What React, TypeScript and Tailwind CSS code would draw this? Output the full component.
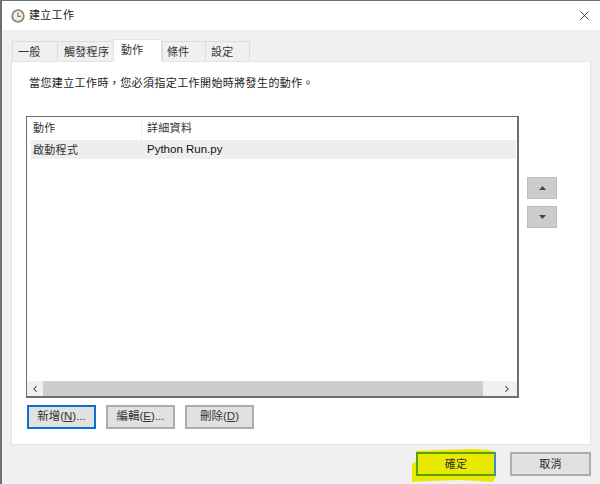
import { ChevronLeft, ChevronRight, X } from 'lucide-react';

const tabs = ['一般', '觸發程序', '動作', '條件', '設定'];
const widths = ['w-[45px] pl-[5px]', 'w-[56px] pl-[6px]', 'w-[49px] pl-[7px]', 'w-[43px] pl-[4px]', 'w-[45px] pl-[5px]'];

function ClockIcon() {
  return (
    <svg width="14" height="14" viewBox="0 0 14 14">
      <circle cx="7" cy="7" r="5.8" fill="#f4f1e4" stroke="#85888a" strokeWidth="1.8" />
      <path d="M7 3.5V7.4H10" fill="none" stroke="#a07c2c" strokeWidth="1.2" />
    </svg>
  );
}

function Button({ label, hotkey, suffix, focused }: { label: string; hotkey: string; suffix?: string; focused?: boolean }) {
  return (
    <button
      type="button"
      className={`h-[24px] w-[69px] text-[11.5px] leading-none text-[#333] bg-[#e1e1e1] border-2 ${
        focused ? 'border-[#0a70d0]' : 'border-[#adadad]'
      }`}
    >
      {label}(<span className="underline">{hotkey}</span>){suffix}
    </button>
  );
}

function MoveButton({ up }: { up?: boolean }) {
  return (
    <div className="w-[30px] h-[22px] bg-[#cccccc] border border-[#bdbdbd] flex items-center justify-center">
      <svg width="7" height="4" viewBox="0 0 7 4" className={up ? '' : 'rotate-180'}>
        <path d="M0 4L3.5 0L7 4Z" fill="#444" />
      </svg>
    </div>
  );
}

export default function App() {
  return (
    <div className="relative w-[600px] h-[484px] overflow-hidden bg-[#f0f0f0] border-t border-l-2 border-[#6f6f6f] font-['Liberation_Sans','Noto_Sans_CJK_TC',sans-serif] flex flex-col">
      {/* title bar */}
      <div className="h-[29px] shrink-0 bg-white flex items-center pl-[9px] pr-[8px] gap-[4px]">
        <ClockIcon />
        <span className="text-[11px] tracking-[0.3px] text-[#222]">建立工作</span>
        <X className="ml-auto" size={15} strokeWidth={1.2} color="#111" />
      </div>

      {/* tabs */}
      <div className="flex items-end h-[31px] shrink-0 pl-[10px]">
        {tabs.map((t, i) =>
          i === 2 ? (
            <div key={t} className={`${widths[i]} relative z-10 -mb-px h-[23px] bg-white border-x border-t border-[#e2e2e2] pt-[2px] text-[11px] leading-[16px] tracking-[0.3px] text-[#333]`}>
              {t}
            </div>
          ) : (
            <div key={t} className={`${widths[i]} h-[20px] bg-[#f0f0f0] border-l border-t border-[#dcdcdc] last:border-r pt-[2px] text-[11px] tracking-[0.3px] text-[#333] leading-[16px]`}>
              {t}
            </div>
          ),
        )}
      </div>

      {/* panel */}
      <div className="ml-[9px] w-[580px] h-[384px] shrink-0 bg-white border border-[#e4e4e4] pl-[14px] pt-[12px]">
        <p className="pl-[3px] text-[11px] leading-[18px] tracking-[0.4px] text-[#222]">當您建立工作時，您必須指定工作開始時將發生的動作。</p>

        <div className="flex mt-[24px]">
          <div className="w-[493px] h-[282px] border border-[#6e6e6e] border-r-2 border-b-2 flex flex-col text-[11px] tracking-[0.3px] text-[#333]">
            <div className="flex h-[23px] shrink-0 items-center">
              <span className="w-[115px] pl-[6px] border-r border-[#f0f0f0] h-full flex items-center">動作</span>
              <span className="pl-[5px]">詳細資料</span>
            </div>
            <div className="flex h-[19px] shrink-0 items-center pt-px bg-[#eeeeee] ml-[4px] mr-px">
              <span className="w-[111px] pl-[2px]">啟動程式</span>
              <span className="pl-[5px] text-[11.5px] text-[#111] tracking-normal">Python Run.py</span>
            </div>
            <div className="flex-1" />
            <div className="h-[15px] shrink-0 flex items-center bg-[#f0f0f0]">
              <div className="w-[16px] flex justify-center">
                <ChevronLeft size={10} strokeWidth={2.5} color="#333" />
              </div>
              <div className="w-[440px] h-full bg-[#cdcdcd]" />
              <div className="flex-1 flex justify-end pr-[5px]">
                <ChevronRight size={10} strokeWidth={2.5} color="#333" />
              </div>
            </div>
          </div>

          <div className="flex flex-col gap-[7px] ml-[8px] mt-[61px]">
            <MoveButton up />
            <MoveButton />
          </div>
        </div>

        <div className="flex gap-[10px] mt-[7px] ml-px">
          <Button label="新增" hotkey="N" suffix="..." focused />
          <Button label="編輯" hotkey="E" suffix="..." />
          <Button label="刪除" hotkey="D" />
        </div>
      </div>

      {/* footer */}
      <div className="flex justify-end gap-[14px] pr-[9px] pt-[7px]">
        <div className="relative w-[80px] h-[24px]">
          {/* marker scribble */}
          <svg className="absolute -left-[5px] -top-[3px]" width="90" height="34" viewBox="0 0 90 34">
            <path d="M5 2L30 1L62 0L78 1L84 3L85 27L82 33L50 31L20 32L1 33L1 15L5 13Z" fill="#e9e900" />
          </svg>
          <div className="relative h-full border-2 border-[#5e9e10] border-r-[#3a8fc0] bg-[#e9e900] flex items-center justify-center text-[11px] tracking-[0.3px] text-[#333]">確定</div>
        </div>
        <div className="w-[81px] h-[24px] bg-[#e1e1e1] border-2 border-[#adadad] flex items-center justify-center text-[11px] tracking-[0.3px] text-[#222]">取消</div>
      </div>
    </div>
  );
}
